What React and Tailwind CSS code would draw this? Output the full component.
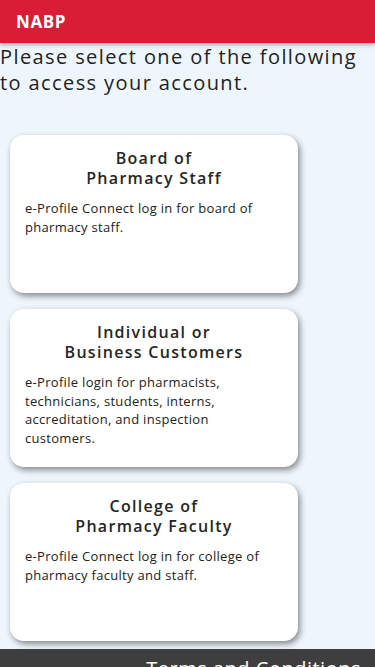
import React from "react";

const cards = [
  {
    title: ["Board of", "Pharmacy Staff"],
    text: "e-Profile Connect log in for board of pharmacy staff.",
  },
  {
    title: ["Individual or", "Business Customers"],
    text: "e-Profile login for pharmacists, technicians, students, interns, accreditation, and inspection customers.",
  },
  {
    title: ["College of", "Pharmacy Faculty"],
    text: "e-Profile Connect log in for college of pharmacy faculty and staff.",
  },
];

const Card = ({ title, text }) => (
  <div className="w-[288px] h-[158px] bg-white rounded-[14px] shadow-[2px_3px_6px_rgba(0,0,0,0.45)] pl-[15px] pr-[22px] pt-[13px] cursor-pointer">
    <h2 className="text-center pl-[7px] text-[16px] leading-[20px] font-semibold tracking-[1.3px] text-[#262626]">
      {title[0]}
      <br />
      {title[1]}
    </h2>
    <p className="mt-[11px] text-[13px] leading-[18.5px] tracking-[0.3px] text-[#222]">{text}</p>
  </div>
);

export default function App() {
  return (
    <div
      className="h-[667px] bg-[#eef6fd] flex flex-col overflow-hidden"
      style={{ fontFamily: '"Open Sans", "Noto Sans", sans-serif' }}
    >
      <header className="h-[43px] shrink-0 bg-[#da1d36] flex items-center px-4 shadow-[0_2px_4px_rgba(0,0,0,0.3)] relative z-10">
        <span className="text-white font-bold text-[17px] tracking-[0.6px]">NABP</span>
      </header>
      <h1 className="text-[20px] leading-[26px] tracking-[1.4px] text-[#222] pt-[1px]">
        Please select one of the following to access your account.
      </h1>
      <main className="flex flex-col gap-4 pl-[10px] pt-[39px] pb-2 shrink-0">
        {cards.map((c, i) => (
          <Card key={i} {...c} />
        ))}
      </main>
      <footer className="bg-[#3e3e3e] h-[40px] shrink-0 flex justify-end pr-[14px]">
        <span className="text-white text-[20px] leading-[24px] tracking-[0.5px] pt-[8px] whitespace-nowrap">
          Terms and Conditions
        </span>
      </footer>
    </div>
  );
}
